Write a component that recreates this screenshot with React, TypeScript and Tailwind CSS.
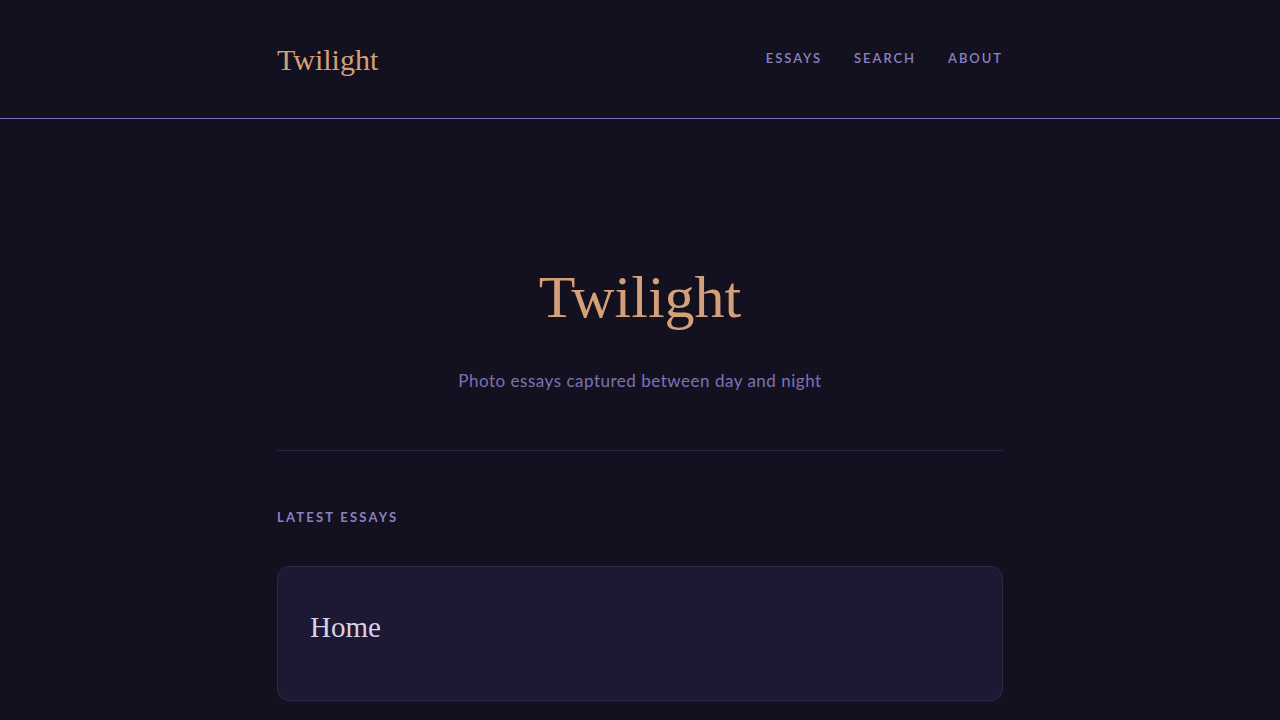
const serif = { fontFamily: '"Liberation Serif", "DejaVu Serif", serif' };

const navItems = ['Essays', 'Search', 'About'];

export default function App() {
  return (
    <div className="min-h-screen bg-[#13111f] font-['Lato','Open_Sans',sans-serif] text-[#8b80c0]">
      <header className="border-b border-[#7a6fc0]">
        <div className="mx-auto flex h-[118px] w-[726px] items-center justify-between">
          <a href="#" className="text-[30px] text-[#d4a07a]" style={serif}>
            Twilight
          </a>
          <nav className="flex gap-8 text-[13px] font-semibold uppercase tracking-[0.15em]">
            {navItems.map((item) => (
              <a key={item} href="#" className="text-[#8b80c0]">
                {item}
              </a>
            ))}
          </nav>
        </div>
      </header>

      <main className="mx-auto w-[726px]">
        <section className="flex flex-col items-center pt-[142px] pb-[56px]">
          <h1 className="text-[60px] leading-[72px] text-[#d4a07a]" style={serif}>
            Twilight
          </h1>
          <p className="mt-[35px] text-[17px] tracking-[0.03em] text-[#7d72b4]">
            Photo essays captured between day and night
          </p>
        </section>

        <div className="h-px bg-[#2a2540]" />

        <h2 className="mt-[57px] text-[13px] font-bold uppercase tracking-[0.17em] text-[#8b80c0]">
          Latest Essays
        </h2>

        <a
          href="#"
          className="mt-[39px] block h-[135px] rounded-xl border border-[#2d2848] bg-[#1d1932] px-8 pt-[40px]"
        >
          <h3 className="text-[29px] leading-[40px] text-[#d9d0ea]" style={serif}>
            Home
          </h3>
        </a>
      </main>
    </div>
  );
}
